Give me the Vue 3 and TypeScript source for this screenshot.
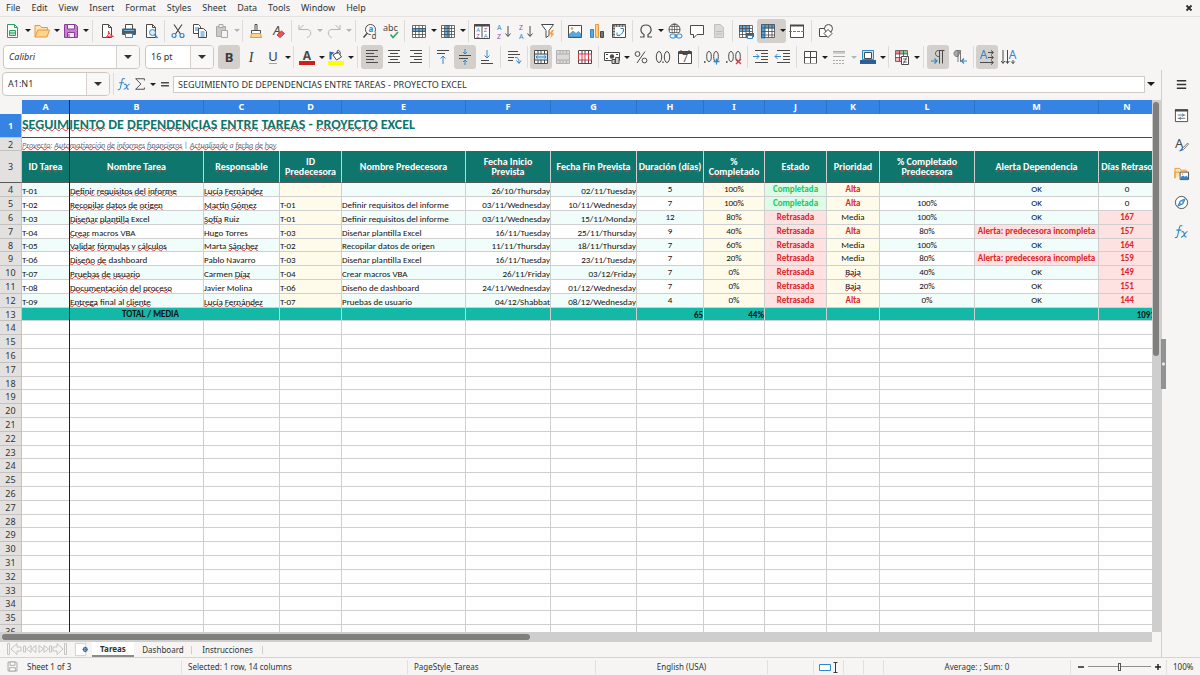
<script setup lang="ts">
import { computed, onBeforeUnmount, onMounted, ref } from 'vue'

interface Tool {
  icon?: string
  label?: string
  menu?: boolean
  on?: boolean
  off?: boolean
  slim?: boolean
  sep?: 'thin' | 'wide'
}

const t = (icon: string, label: string, extra: Partial<Tool> = {}): Tool => ({ icon, label, ...extra })
const thin: Tool = { sep: 'thin' }
const wide: Tool = { sep: 'wide' }

const menus = ['File', 'Edit', 'View', 'Insert', 'Format', 'Styles', 'Sheet', 'Data', 'Tools', 'Window', 'Help']

const D = '#4a4a4a'
const B = '#2f87cc'
const page = `<path d="M3.5 1.5h6l3 3v10h-9z" fill="#fff" stroke="${D}"/><path d="M9.5 1.5v3h3" fill="none" stroke="${D}"/>`
const gridLines = `<path d="M1.5 2.5h13v12h-13zM1.5 5.5h13M1.5 8.5h13M1.5 11.5h13M4.5 2.5v12M8 2.5v12M11.5 2.5v12" fill="none" stroke="${D}" stroke-width=".8"/>`
const txt = (x: number, y: number, s: string, size: number, fill: string, extra = '') =>
  `<text x="${x}" y="${y}" font-size="${size}" fill="${fill}" font-family="Noto Sans, sans-serif" ${extra}>${s}</text>`
const mid = 'text-anchor="middle"'
const lines = (a: number[][]) =>
  `<path d="${a.map(([x, y, w]) => `M${x} ${y}h${w}`).join('')}" stroke="${D}" fill="none"/>`

const icons: Record<string, string> = {
  new: `<path d="M2.5 1.5h7l3 3v10h-10z" fill="#fff" stroke="#28a35a"/><path d="M9.5 1.5v3h3" fill="none" stroke="#28a35a"/><path d="M4.5 7.5h6v5h-6zM4.5 10h6" fill="#bfe8ce" stroke="#28a35a"/>`,
  open: `<path d="M1 14V2.500h5l1.500 2h6V7" fill="#fbe3b3" stroke="#e8973a"/><path d="M1 14L4 7h11.500l-2.500 7z" fill="#fbd58e" stroke="#e8973a"/>`,
  save: `<path d="M1.500 1.500h11l2 2v11h-13z" fill="#c77fd0" stroke="#8a3d98"/><path d="M4.500 1.500h7v4.500h-7z" fill="#fff" stroke="#8a3d98"/><path d="M4.500 9.500h7v5h-7z" fill="#f4e3f6" stroke="#8a3d98"/><path d="M6 11v3" stroke="#8a3d98"/>`,
  pdf: `${page}<path d="M7 14.500c2-2 3-4 2.500-6.500c.5 3 2.500 5 5 5.500c-3-.8-5-.2-7.500 1z" fill="#fff" stroke="#e0333f"/>`,
  print: `<path d="M4.500 1.500h7v5h-7z" fill="#fff" stroke="${D}"/><rect x="1" y="5.500" width="14" height="6.500" rx="1" fill="#505a60"/><path d="M3 7.500h10" stroke="#6fb2e2"/><path d="M4.500 10.500h7v4h-7z" fill="#fff" stroke="${B}"/>`,
  preview: `${page}<circle cx="9.500" cy="9.500" r="3" fill="#d9ecfa" stroke="${B}"/><path d="M11.500 11.500l3 3.500" stroke="${B}" stroke-width="1.500"/>`,
  cut: `<path d="M4 1.500l6.500 9.500M12 1.500L5.500 11" stroke="${D}" fill="none" stroke-width="1.200"/><circle cx="4" cy="12.500" r="2" fill="none" stroke="${B}" stroke-width="1.200"/><circle cx="12" cy="12.500" r="2" fill="none" stroke="${B}" stroke-width="1.200"/>`,
  copy: `<path d="M1.500 1.500h5l2 2v7h-7z" fill="#fff" stroke="${D}"/><path d="M3 5h4M3 7h4" stroke="${B}"/><path d="M6.500 5.500h5l3 3v6h-8z" fill="#fff" stroke="${D}"/><path d="M8.500 9h4M8.500 11h4M8.500 13h4" stroke="${B}"/>`,
  paste: `<path d="M2.500 3.500h9v10h-9z" fill="#c9c9c9" stroke="#a8a8a8"/><path d="M5 1.500h4v3H5z" fill="#eee" stroke="#a8a8a8"/><path d="M7.500 7.500h6v7h-6z" fill="#f4f4f4" stroke="#a8a8a8"/>`,
  brush: `<path d="M7 1.500h2v6H7z" fill="#fff" stroke="${D}"/><path d="M3.500 7.500h9v3h-9z" fill="#fff" stroke="${D}"/><path d="M3.500 10.500l-1 4h11l-1-4z" fill="#fbd58e" stroke="#e8973a"/>`,
  clear: `${txt(7, 12, 'A', 13, D, mid + ' font-style="italic"')}<path d="M7 12l4.500-4l3 2.500l-4.500 4z" fill="#f0525c" stroke="#c9303b"/>`,
  undo: `<path d="M6.500 2L2 6.500h8c5 0 5 6.500 0 8M2 6.500V2" fill="none" stroke="#b5b5b5"/>`,
  redo: `<path d="M9.500 2L14 6.500H6c-5 0-5 6.500 0 8M14 6.500V2" fill="none" stroke="#b5b5b5"/>`,
  find: `<circle cx="8.500" cy="6.500" r="5" fill="#fff" stroke="${D}"/><path d="M5 10.500L1.500 14.500" stroke="${D}" stroke-width="1.500"/>${txt(6.5, 9, 'a', 8, B, 'font-weight="bold"')}<rect x="9" y="9" width="6" height="7" fill="#f6f5f4"/>${txt(9.5, 15.5, 'd', 8, D)}`,
  spell: `${txt(0, 7.5, 'abc', 9, D)}<path d="M7.500 11.500l2.500 3l5-5.500" fill="none" stroke="#27a560" stroke-width="1.500"/>`,
  row: `<rect x="1" y="2" width="14" height="13" fill="#fff"/><rect x="1" y="5" width="14" height="4" fill="#5fa8de"/>${gridLines}`,
  col: `<rect x="1" y="2" width="14" height="13" fill="#fff"/><rect x="5" y="2" width="5" height="13" fill="#5fa8de"/>${gridLines}`,
  sort: `<path d="M.5 1.500h15v14H.5zM8 1.500v13" fill="#fff" stroke="${D}"/><path d="M0 2.500h16" stroke="${D}" stroke-width="2"/>${txt(2.2, 8.500, 'A', 6, B)}${txt(2.2, 15, 'Z', 6, '#a349b0')}${txt(9.7, 8.500, 'Z', 6, '#a349b0')}${txt(9.7, 15, 'A', 6, B)}`,
  az: `${txt(1, 6.500, 'A', 7, B)}${txt(1, 15.500, 'Z', 7, '#a349b0')}<path d="M12 3v10M9.500 10.500L12 13.500l2.500-3" fill="none" stroke="${D}"/>`,
  za: `${txt(1, 6.500, 'Z', 7, '#a349b0')}${txt(1, 15.500, 'A', 7, B)}<path d="M12 3v10M9.500 10.500L12 13.500l2.500-3" fill="none" stroke="${D}"/>`,
  filter: `<path d="M1.500 1.500h12L9 7.500v5l-3 2v-7z" fill="#fff" stroke="${D}"/><path d="M12 7l-3 4.500h2.500L10 15.500l4.500-5h-2.500l2-3.500z" fill="#f5a03c"/>`,
  image: `<path d="M1.500 2.500h13v12h-13z" fill="#fff" stroke="${D}"/><path d="M2 14v-2.500l4-3.500l3 2.500l2.500-2l2.500 2.500v3z" fill="#5fa8de" stroke="${B}" stroke-width=".6"/><circle cx="5" cy="5.500" r="1.300" fill="#f0a23c"/>`,
  chart: `<path d="M1.500 6.500h3v8h-3z" fill="#5fa8de" stroke="${B}"/><path d="M6.500 1.500h3v13h-3z" fill="#fbd08a" stroke="#e8973a"/><path d="M11.500 8.500h3v6h-3z" fill="#777" stroke="${D}"/>`,
  pivot: `<path d="M1.500 1.500h13v13h-13z" fill="#fff" stroke="${D}"/><path d="M1.500 3h13M3 1.500v13" stroke="#666" stroke-width="2" stroke-dasharray="2 1"/><path d="M6 9.500v3h3M12.500 8.500v-3h-3M6 12.500c4 0 6-2 6.500-6" fill="none" stroke="${B}"/>`,
  omega: `<path d="M2 14h4v-2.500C1 8.500 2.500 2 8 2s7 6.500 2 9.500V14h4" fill="none" stroke="${D}" stroke-width="1.200"/>`,
  link: `<circle cx="7.500" cy="6.500" r="5.500" fill="#fff" stroke="${D}"/><path d="M2 6.500h11M7.500 1v11M3 3.500h9M3 9.500h9" stroke="${D}" stroke-width=".7"/><ellipse cx="7.500" cy="6.500" rx="2.500" ry="5.500" fill="none" stroke="${D}" stroke-width=".7"/><rect x="2" y="10" width="14" height="6" fill="#f6f5f4"/><rect x="3" y="11" width="6" height="4" rx="2" fill="none" stroke="${B}"/><rect x="9" y="11" width="6" height="4" rx="2" fill="none" stroke="${B}"/><path d="M7 13h4" stroke="${B}"/>`,
  comment: `<path d="M1.500 2.500h13v9H8l-3.500 3.500v-3.500h-3z" fill="#fff" stroke="${D}"/>`,
  header: `<path d="M3.500 1.500h6l3 3v10h-9z" fill="#d9d9d9" stroke="#c0c0c0"/><path d="M5 8.500h6M5 11h6" stroke="#bbb"/>`,
  prange: `<rect x="1" y="2" width="14" height="12" fill="#fff"/><rect x="1" y="2" width="11" height="6" fill="#5fa8de"/>${gridLines}<rect x="8" y="10" width="8" height="4" fill="#505a60"/><path d="M9.500 12.500h5v3h-5z" fill="#fff" stroke="${B}"/>`,
  freeze: `<path d="M1.500 2v12h13v-12z" fill="#fff"/><path d="M1 1.500h14v4H5v10H1z" fill="#4fa0dd"/><path d="M1.500 1.500h13v13h-13zM5 1.500v13M8.500 1.500v13M12 1.500v13M1.500 5h13M1.500 8.500h13M1.500 12h13" fill="none" stroke="${D}" stroke-width=".8"/>`,
  split: `<path d="M1.500 2.500h13v12h-13z" fill="#fff" stroke="${D}"/><path d="M1 2.500h14" stroke="${D}" stroke-width="2"/><path d="M0 8.500h16" stroke="${B}" stroke-dasharray="3 1"/>`,
  shapes: `<path d="M1.500 5.500h8v8h-8z" fill="#fff" stroke="${D}"/><circle cx="10.500" cy="5.500" r="4" fill="#f6f5f4" stroke="${D}"/><path d="M10 6.500l4 4l-4 4l-4-4z" fill="#fff" stroke="${D}"/>`,
  bold: txt(8, 12.5, 'B', 13, '#3a3a3a', mid + ' font-weight="bold"'),
  italic: `<text x="8" y="12.500" font-size="14" fill="#3a3a3a" font-family="Liberation Serif, serif" font-style="italic" ${mid}>I</text>`,
  underline: `${txt(8, 12, 'U', 13, '#3a3a3a', mid)}<path d="M4 14.500h8" stroke="#6fb2e2"/>`,
  fontcolor: `${txt(8, 11, 'A', 12, D, mid + ' font-weight="bold"')}<rect x="0" y="12" width="16" height="4" fill="#c9211e"/>`,
  highlight: `<path d="M5 6l5-3l3.500 5l-5 3z" fill="#fff" stroke="${D}"/><path d="M9 5q0-5 2-3.500t1 4" fill="none" stroke="${D}"/><path d="M1.500 2.500l5 1l-3 2.500v4.500h-2z" fill="#2b6fae"/><rect x="0" y="12" width="16" height="4" fill="#ffff00"/>`,
  left: lines([[2, 1.5, 12], [2, 4.5, 8], [2, 7.5, 12], [2, 10.5, 8], [2, 13.5, 12]]),
  center: lines([[2, 1.5, 12], [4, 4.5, 8], [2, 7.5, 12], [4, 10.5, 8], [2, 13.5, 12]]),
  right: lines([[2, 1.5, 12], [6, 4.5, 8], [2, 7.5, 12], [6, 10.5, 8], [2, 13.5, 12]]),
  top: `${lines([[2, 1.5, 12], [2, 4.5, 8]])}<path d="M8 15V7M5.500 9.500L8 7l2.500 2.500" fill="none" stroke="${B}"/>`,
  middle: `${lines([[2, 6.5, 12], [2, 9.5, 9]])}<path d="M8 0v4.500M6 3l2 2l2-2M8 16v-4.500M6 13l2-2l2 2" fill="none" stroke="${B}"/>`,
  bottom: `${lines([[2, 11.5, 8], [2, 14.5, 12]])}<path d="M8 1v8M5.500 6.500L8 9l2.500-2.500" fill="none" stroke="${B}"/>`,
  wrap: `${lines([[2, 2.5, 10], [2, 5.5, 12], [2, 8.5, 6], [2, 11.5, 5]])}<path d="M9 8.500c3 0 4 1 4 5.500M10.500 11.500L13 14.500l2-3" fill="none" stroke="${B}"/>`,
  merge: `<path d="M1.500 1.500h13v13h-13z" fill="#fff"/><path d="M1.500 5h13v6h-13z" fill="#cfe6f8"/><path d="M1.500 1.500h13v13h-13zM1.500 5h13M1.500 11h13M5 1.500V5M8 1.500V5M11.500 1.500V5M5 11v3.500M8 11v3.500M11.500 11v3.500" fill="none" stroke="${D}"/><path d="M3 8h10M4.500 6.500L3 8l1.500 1.500M11.500 6.500L13 8l-1.500 1.500" fill="none" stroke="${B}"/>`,
  mergeoff: `<path d="M1.500 1.500h13v13h-13z" fill="#d9d9d9"/><path d="M1.500 1.500h13v13h-13zM1.500 5h13M1.500 11h13M5 1.500V5M8 1.500V5M11.500 1.500V5M5 11v3.500M8 11v3.500M11.500 11v3.500" fill="none" stroke="#b0b0b0"/>`,
  unmerge: `<path d="M1.500 1.500h13v13h-13z" fill="#fff" stroke="${D}"/><path d="M5 1.500V5M8 1.500V5M11.500 1.500V5M5 11v3.500M8 11v3.500M11.500 11v3.500" stroke="${D}"/><path d="M1.500 5h13v6h-13zM5 5v6M8 5v6M11.500 5v6" fill="#fff" stroke="#dc3545"/>`,
  money: `<path d="M.5 3.500h15v8H.5z" fill="#fff" stroke="${D}"/><circle cx="8" cy="7.500" r="2.200" fill="${D}"/><path d="M2 5.500h2M12 5.500h2M2 9.500h2" stroke="${D}"/><path d="M8 10.500h3v4H8zM11.500 8.500h3.500v6h-3.500z" fill="#ccc" stroke="${D}"/>`,
  percent: `<circle cx="4.500" cy="5" r="2.400" fill="none" stroke="${D}"/><circle cx="11.500" cy="11.500" r="2.400" fill="none" stroke="${D}"/><path d="M12 2.500L4 14" stroke="${D}"/>`,
  number: `<ellipse cx="4" cy="8" rx="2.700" ry="5.500" fill="none" stroke="${D}"/><ellipse cx="12" cy="8" rx="2.700" ry="5.500" fill="none" stroke="${D}"/><path d="M8 12.500v1.500" stroke="${D}" stroke-width="1.300"/>`,
  date: `<path d="M1.500 2.500h13v12h-13z" fill="#fff" stroke="${D}"/><path d="M1.500 4h13" stroke="${D}" stroke-width="2"/><path d="M4 1v3M12 1v3" stroke="${D}"/>${txt(8, 13, '7', 10, D, mid)}`,
  adddec: `<path d="M.8 12v2" stroke="${D}" stroke-width="1.300"/><ellipse cx="5" cy="7.500" rx="2.300" ry="5" fill="none" stroke="${D}"/><ellipse cx="12" cy="7.500" rx="2.300" ry="5" fill="none" stroke="${D}"/><path d="M12.500 9.500v6M9.500 12.500h6" stroke="${B}" stroke-width="1.300"/>`,
  deldec: `<path d="M.8 12v2" stroke="${D}" stroke-width="1.300"/><ellipse cx="5" cy="7.500" rx="2.300" ry="5" fill="none" stroke="${D}"/><ellipse cx="12" cy="7.500" rx="2.300" ry="5" fill="none" stroke="${D}"/><path d="M10 10l5 5M15 10l-5 5" stroke="#dc3545" stroke-width="1.300"/>`,
  indent: `${lines([[2, 1.5, 13], [8, 4.5, 7], [8, 7.5, 7], [8, 10.5, 7], [2, 13.5, 13]])}<path d="M0 7.500h6M3.500 5L6 7.500l-2.500 2.500" fill="none" stroke="${B}"/>`,
  outdent: `${lines([[2, 1.5, 13], [8, 4.5, 7], [8, 7.5, 7], [8, 10.5, 7], [2, 13.5, 13]])}<path d="M6 7.500H0M2.500 5L0 7.500l2.500 2.500" fill="none" stroke="${B}"/>`,
  border: `<path d="M2.500 2.500h12v12h-12zM8.500 2.500v12M2.500 8.500h12" fill="#fff" stroke="${D}"/><path d="M2 14.500h13" stroke="#e8973a"/>`,
  lines: `<path d="M2 2.500h12M2 4h12M2 7.500h12" stroke="#aaa" stroke-width="1.200"/><path d="M2 11.500h12M2 14.500h12" stroke="#aaa" stroke-dasharray="2 1"/>`,
  bordercolor: `<path d="M2.500 1.500h11v9h-11z" fill="#cfe6f8" stroke="${B}"/><path d="M4.500 3.500h7v6h-7z" fill="#fff" stroke="${D}"/><rect x="0" y="11" width="16" height="4" fill="#2a6099"/>`,
  cond: `<path d="M1.500 1.500h12v11h-12z" fill="#fff"/><rect x="2" y="2" width="5" height="3" fill="#f08080"/><rect x="7" y="2" width="6" height="3" fill="#7ec98f"/><rect x="2" y="8" width="5" height="4" fill="#f5b5b5"/><path d="M1.500 1.500h12v11h-12zM1.500 5h12M1.500 8.500h12M5.500 1.500v11M9.500 1.500v11" fill="none" stroke="${D}" stroke-width=".8"/><path d="M7.500 7.500h7v8h-7z" fill="#fff" stroke="${D}"/><path d="M9 10h4M9 13h4M12.500 8.500l-3 6" stroke="${D}" stroke-width=".8"/>`,
  ltr: `<path d="M14.500 1.500H8.500c-4 0-4 6 0 6h1M9.500 1.500V14.500M12.500 1.500V14.500" fill="none" stroke="${D}"/><path d="M1 12h6M4.500 9.500L7 12l-2.500 2.500" fill="none" stroke="${B}" stroke-width="1.200"/>`,
  rtl: `<path d="M8.500 1.500H5c-4 0-4 6 0 6h1z" fill="#aaa" stroke="#777"/><path d="M6 1.500V13M8.500 1.500V13" fill="none" stroke="#777"/><path d="M15 12H9.500M12 9.500L9.500 12L12 14.500" fill="none" stroke="${B}" stroke-width="1.200"/>`,
  horiz: `${txt(4.5, 10, 'A', 12, B, mid)}<path d="M9 3.500h5M12 1.500l2.500 2l-2.500 2M9 8.500h5M12 6.500l2.500 2l-2.500 2M1 13.500h13M12 11.500l2.500 2l-2.500 2" fill="none" stroke="${D}"/>`,
  vert: `${txt(11.5, 10, 'A', 12, B, mid)}<path d="M2 1v13M.2 12L2 14.500L3.800 12M6.500 1v13M4.700 12L6.500 14.500L8.300 12M12 11v3.500M10.200 12.500L12 14.500l1.800-2" fill="none" stroke="${D}"/>`,
  fx: `<path d="M9 2.300C7 .8 6 2 5.500 5L4 12c-.4 2-1.500 3-3 2.200M2.500 6.500h5.500" fill="none" stroke="${B}" stroke-width="1.200"/><path d="M8 8.500c2-1 2.500 0 3 2.500s1 3.500 2.500 2.500M14.500 8c-2.500 0-4 6.500-7 6" fill="none" stroke="${B}" stroke-width="1.200"/>`,
  sum: `<path d="M13 4V2H3l6 6l-6 6h10v-2" fill="none" stroke="${D}" stroke-width="1.100"/>`,
  equal: `<path d="M3.500 6.500h9M3.500 10h9" stroke="${D}" stroke-width="1.600"/>`,
  burger: `<path d="M3 4h10M3 8h10M3 12h10" stroke="#333" stroke-width="1.500"/>`,
  props: `<path d="M1.500 2h13v12.500h-13z" fill="#fff" stroke="${D}"/><path d="M1 2.500h14" stroke="${D}" stroke-width="2.500"/><path d="M4 7.500h8M4 11h8" stroke="${D}" stroke-width=".8"/><path d="M8.500 6l2 1.500l-2 1.500M7.500 9.500l-2 1.500l2 1.500" fill="none" stroke="${B}"/>`,
  styles: `${txt(5.5, 12, 'A', 14, D, mid)}<path d="M14.500 6.500l1 1l-5.500 6l-1.500-1z" fill="#fff" stroke="${D}" stroke-width=".8"/><path d="M5 15q4 1 5-2l-1.800-1.200Q6.500 14.500 5 15z" fill="${B}"/>`,
  gallery: `<path d="M1 13V2.500h5l1.500 2h5.500v3" fill="#fbe3b3" stroke="#e8973a"/><path d="M1 13V6.500h5" fill="none" stroke="#e8973a"/><path d="M6.500 6.500h9v8h-9z" fill="#fff" stroke="${D}"/><path d="M7 14v-2l2.500-2l2 1.500l1.500-1l2 1.500v2z" fill="${B}"/><circle cx="9" cy="8.500" r=".8" fill="#e8973a"/>`,
  compass: `<circle cx="8" cy="8" r="6.500" fill="#fff" stroke="${D}"/><path d="M12 4L9.500 9.500L4 12l2.500-5.500z" fill="#5fa8de" stroke="${B}"/><circle cx="8" cy="8" r="1" fill="#fff"/>`,
  disk: `<path d="M2.500 2.500h10l1 1v10h-11z" fill="#f6f5f4" stroke="#999"/><path d="M5 2.500h6v4H5zM4.500 9.500h7v4h-7z" fill="#fff" stroke="#999"/>`,
  addsheet: `<path d="M1.500 1.500h11v13h-11z" fill="#fff" stroke="#cfcfcf"/><circle cx="12" cy="8" r="2" fill="none" stroke="#3465a4" stroke-width="1.300"/><path d="M12 5v6M9 8h6" stroke="#3465a4" stroke-width=".7"/>`,
}

const standardBar: Tool[] = [
  t('new', 'New', { menu: true }), t('open', 'Open', { menu: true }), t('save', 'Save', { menu: true }), wide,
  t('pdf', 'Export as PDF'), t('print', 'Print'), t('preview', 'Print Preview'), thin,
  t('cut', 'Cut'), t('copy', 'Copy'), t('paste', 'Paste', { menu: true, off: true }), thin,
  t('brush', 'Clone Formatting'), t('clear', 'Clear Direct Formatting'), thin,
  t('undo', 'Undo', { menu: true, off: true }), t('redo', 'Redo', { menu: true, off: true }), wide,
  t('find', 'Find and Replace'), t('spell', 'Spelling', { slim: true }), wide,
  t('row', 'Row', { menu: true }), t('col', 'Column', { menu: true }), thin,
  t('sort', 'Sort'), t('az', 'Sort Ascending'), t('za', 'Sort Descending'), t('filter', 'AutoFilter'), thin,
  t('image', 'Insert Image'), t('chart', 'Insert Chart'), t('pivot', 'Insert Pivot Table'), thin,
  t('omega', 'Special Character', { menu: true }), t('link', 'Insert Hyperlink'), t('comment', 'Insert Comment'),
  t('header', 'Headers and Footers', { off: true }), thin,
  t('prange', 'Define Print Area'), t('freeze', 'Freeze Rows and Columns', { menu: true, on: true }),
  t('split', 'Split Window'), wide, t('shapes', 'Show Draw Functions'),
]

const formatBar: Tool[] = [
  t('bold', 'Bold', { on: true }), t('italic', 'Italic'), t('underline', 'Underline', { menu: true }), thin,
  t('fontcolor', 'Font Color', { menu: true }), t('highlight', 'Background Color', { menu: true }), wide,
  t('left', 'Align Left', { on: true }), t('center', 'Center Horizontally'), t('right', 'Align Right'), thin,
  t('top', 'Align Top'), t('middle', 'Center Vertically', { on: true }), t('bottom', 'Align Bottom'), thin,
  t('wrap', 'Wrap Text'), thin,
  t('merge', 'Merge and Center Cells', { on: true }), t('mergeoff', 'Merge Cells', { off: true }), t('unmerge', 'Unmerge Cells'), thin,
  t('money', 'Format as Currency', { menu: true }), t('percent', 'Format as Percent'), t('number', 'Format as Number'), t('date', 'Format as Date'), thin,
  t('adddec', 'Add Decimal Place'), t('deldec', 'Delete Decimal Place'), thin,
  t('indent', 'Increase Indent'), t('outdent', 'Decrease Indent'), thin,
  t('border', 'Borders', { menu: true }), t('lines', 'Border Style', { menu: true, off: true }), t('bordercolor', 'Border Color', { menu: true }), thin,
  t('cond', 'Conditional', { menu: true }), wide,
  t('ltr', 'Left-To-Right', { on: true }), t('rtl', 'Right-To-Left'), thin,
  t('horiz', 'Text direction from left to right', { on: true }), t('vert', 'Text direction from top to bottom'),
]

const deck = [
  { icon: 'props', label: 'Properties' },
  { icon: 'styles', label: 'Styles' },
  { icon: 'gallery', label: 'Gallery' },
  { icon: 'compass', label: 'Navigator' },
  { icon: 'fx', label: 'Functions' },
]

const columns = 'ABCDEFGHIJKLMN'.split('')
const fontName = ref('Calibri')
const fontSize = ref('16 pt')
const cellRange = ref('A1:N1')
const formula = ref('SEGUIMIENTO DE DEPENDENCIAS ENTRE TAREAS - PROYECTO EXCEL')
const zoomLevel = ref(100)

// Words wrapped in tildes carry the spell checker's wavy line.
const title = '~SEGUIMIENTO~ DE ~DEPENDENCIAS~ ~ENTRE~ ~TAREAS~ - ~PROYECTO~ EXCEL'
const subtitle = '~Proyecto~: ~Automatización~ ~de~ ~informes~ ~financieros~ | ~Actualizado~ a ~fecha~ ~de~ ~hoy~'
const headings = [
  'ID ~Tarea~', '~Nombre~ ~Tarea~', '~Responsable~', 'ID ~Predecesora~', '~Nombre~ ~Predecesora~',
  '~Fecha~ ~Inicio~ ~Prevista~', '~Fecha~ ~Fin~ ~Prevista~', '~Duración~ (~días~)', '% ~Completado~', '~Estado~',
  '~Prioridad~', '% ~Completado~ ~Predecesora~', '~Alerta~ ~Dependencia~', '~Días~ ~Retraso~',
]

const tasks: string[][] = [
  ['T-01', '~Definir~ ~requisitos~ ~del~ ~informe~', '~Lucía~ ~Fernández~', '', '', '26/10/Thursday', '02/11/Tuesday', '5', '100%', 'Completada', 'Alta', '', 'OK', '0'],
  ['T-02', '~Recopilar~ ~datos~ ~de~ ~origen~', '~Martín~ ~Gómez~', 'T-01', 'Definir requisitos del informe', '03/11/Wednesday', '10/11/Wednesday', '7', '100%', 'Completada', 'Alta', '100%', 'OK', '0'],
  ['T-03', '~Diseñar~ ~plantilla~ Excel', '~Sofía~ Ruiz', 'T-01', 'Definir requisitos del informe', '03/11/Wednesday', '15/11/Monday', '12', '80%', 'Retrasada', 'Media', '100%', 'OK', '167'],
  ['T-04', '~Crear~ macros VBA', 'Hugo Torres', 'T-03', 'Diseñar plantilla Excel', '16/11/Tuesday', '25/11/Thursday', '9', '40%', 'Retrasada', 'Alta', '80%', 'Alerta: predecesora incompleta', '157'],
  ['T-05', '~Validar~ ~fórmulas~ y ~cálculos~', 'Marta ~Sánchez~', 'T-02', 'Recopilar datos de origen', '11/11/Thursday', '18/11/Thursday', '7', '60%', 'Retrasada', 'Media', '100%', 'OK', '164'],
  ['T-06', '~Diseño~ ~de~ dashboard', 'Pablo Navarro', 'T-03', 'Diseñar plantilla Excel', '16/11/Tuesday', '23/11/Tuesday', '7', '20%', 'Retrasada', 'Media', '80%', 'Alerta: predecesora incompleta', '159'],
  ['T-07', '~Pruebas~ ~de~ ~usuario~', 'Carmen ~Díaz~', 'T-04', 'Crear macros VBA', '26/11/Friday', '03/12/Friday', '7', '0%', 'Retrasada', '~Baja~', '40%', 'OK', '149'],
  ['T-08', '~Documentación~ ~del~ ~proceso~', 'Javier Molina', 'T-06', 'Diseño de dashboard', '24/11/Wednesday', '01/12/Wednesday', '7', '0%', 'Retrasada', '~Baja~', '20%', 'OK', '151'],
  ['T-09', '~Entrega~ final al ~cliente~', '~Lucía~ ~Fernández~', 'T-07', 'Pruebas de usuario', '04/12/Shabbat', '08/12/Wednesday', '4', '0%', 'Retrasada', 'Alta', '0%', 'OK', '144'],
]
const totals = ['', '', '', '', '65', '44%', '', '', '', '', '1091']

// Blank rows continue below the totals until the window is filled.
const winHeight = ref(window.innerHeight)
const onResize = () => { winHeight.value = window.innerHeight }
onMounted(() => window.addEventListener('resize', onResize))
onBeforeUnmount(() => window.removeEventListener('resize', onResize))
const emptyRows = computed(() => {
  const count = Math.max(0, Math.ceil((winHeight.value - 364) / 13.75))
  return Array.from({ length: count }, (_, i) => i + 14)
})

const parts = (s: string) =>
  s.split('~').map((text, i) => ({ text, wavy: i % 2 === 1 })).filter((p) => p.text)

function cellClass(value: string, col: number): string[] {
  const out: string[] = []
  if (col === 5 || col === 6) out.push('end')
  if (col >= 7) out.push('mid')
  if (col === 3 || col === 8 || col === 10) out.push('cream')
  if (value === 'Completada') out.push('done')
  if (value === 'Retrasada' || value.startsWith('Alerta') || (col === 13 && value !== '0')) out.push('late')
  if (value === 'Alta') out.push('high')
  return out
}
</script>

<template>
  <div class="app">
    <nav class="menubar" aria-label="Menu">
      <button v-for="m in menus" :key="m" type="button">{{ m }}</button>
      <button type="button" class="close" aria-label="Close document">
        <svg viewBox="0 0 8 8"><path d="M1.500 1.500l5 5M6.500 1.500l-5 5" stroke="#2e2e2e" stroke-width="1.800" /></svg>
      </button>
    </nav>

    <div class="toolbar" role="toolbar" aria-label="Standard">
      <template v-for="(b, i) in standardBar" :key="i">
        <span v-if="b.sep" class="sep" :class="b.sep"></span>
        <span v-else class="tool" :class="{ on: b.on, off: b.off, slim: b.slim }">
          <button type="button" class="btn" :aria-label="b.label"><svg viewBox="0 0 16 16" v-html="icons[b.icon!]"></svg></button>
          <button v-if="b.menu" type="button" class="drop" :aria-label="b.label + ' options'"></button>
        </span>
      </template>
    </div>

    <div class="toolbar format" role="toolbar" aria-label="Formatting">
      <span class="combo font">
        <input v-model="fontName" aria-label="Font Name" />
        <button type="button" aria-label="Choose font"></button>
      </span>
      <span class="combo size">
        <input v-model="fontSize" aria-label="Font Size" />
        <button type="button" aria-label="Choose size"></button>
      </span>
      <template v-for="(b, i) in formatBar" :key="i">
        <span v-if="b.sep" class="sep" :class="b.sep"></span>
        <span v-else class="tool" :class="{ on: b.on, off: b.off }">
          <button type="button" class="btn" :aria-label="b.label"><svg viewBox="0 0 16 16" v-html="icons[b.icon!]"></svg></button>
          <button v-if="b.menu" type="button" class="drop" :aria-label="b.label + ' options'"></button>
        </span>
      </template>
    </div>

    <div class="work">
      <main class="doc">
        <div class="formulabar">
          <span class="combo name">
            <input v-model="cellRange" aria-label="Name Box" />
            <button type="button" aria-label="Choose range"></button>
          </span>
          <span class="sep thin"></span>
          <button type="button" class="fbtn" aria-label="Function Wizard"><svg viewBox="0 0 16 16" v-html="icons.fx"></svg></button>
          <button type="button" class="fbtn" aria-label="Select Function"><svg viewBox="0 0 16 16" v-html="icons.sum"></svg></button>
          <button type="button" class="drop" aria-label="Function options"></button>
          <button type="button" class="fbtn" aria-label="Formula"><svg viewBox="0 0 16 16" v-html="icons.equal"></svg></button>
          <input v-model="formula" class="formula" aria-label="Input line" />
          <button type="button" class="expand" aria-label="Expand Formula Bar"></button>
        </div>

        <div class="gridwrap">
          <div class="sheet">
            <table>
              <colgroup>
                <col class="c-row" />
                <col v-for="c in columns" :key="c" :class="'c-' + c" />
              </colgroup>
              <thead>
                <tr class="letters">
                  <td></td>
                  <th v-for="c in columns" :key="c" scope="col">{{ c }}</th>
                </tr>
              </thead>
              <tbody>
                <tr class="r-title">
                  <th scope="row">1</th>
                  <td colspan="14"><span v-for="(p, k) in parts(title)" :key="k" :class="{ wavy: p.wavy }">{{ p.text }}</span></td>
                </tr>
                <tr class="r-sub">
                  <th scope="row">2</th>
                  <td colspan="14"><span v-for="(p, k) in parts(subtitle)" :key="k" :class="{ wavy: p.wavy }">{{ p.text }}</span></td>
                </tr>
                <tr class="r-head">
                  <th scope="row">3</th>
                  <td v-for="h in headings" :key="h"><span v-for="(p, k) in parts(h)" :key="k" :class="{ wavy: p.wavy }">{{ p.text }}</span></td>
                </tr>
              </tbody>
              <tbody class="body">
                <tr v-for="(r, i) in tasks" :key="r[0]" :class="{ tint: i % 2 === 0 }">
                  <th scope="row">{{ i + 4 }}</th>
                  <td v-for="(v, c) in r" :key="c" :class="cellClass(v, c)"><span v-for="(p, k) in parts(v)" :key="k" :class="{ wavy: p.wavy }">{{ p.text }}</span></td>
                </tr>
                <tr class="r-total">
                  <th scope="row">13</th>
                  <td colspan="3" class="mid">TOTAL / MEDIA</td>
                  <td v-for="(v, c) in totals" :key="c" class="end">{{ v }}</td>
                </tr>
                <tr v-for="n in emptyRows" :key="n">
                  <th scope="row">{{ n }}</th>
                  <td v-for="c in columns" :key="c"></td>
                </tr>
              </tbody>
            </table>
            <span class="freezeline"></span>
          </div>
          <div class="vscroll"><span></span></div>
        </div>
        <div class="hscroll"><span></span></div>

        <div class="tabs" role="tablist">
          <svg class="navs" viewBox="0 0 62 14" fill="none" stroke="#c4c4c4">
            <path d="M1.500 1.500h2v11h-2zM11 1.500L5 7l6 5.500V9h4V5h-4zM17.500 4v6h2V4zM25 3.500L20.500 7l4.500 3.500zM30 3.500L25.500 7l4.500 3.500zM33 3.500L37.500 7L33 10.500zM38 3.500L42.500 7L38 10.500zM43.500 4v6h2V4zM51 1.500L57 7l-6 5.500V9h-4V5h4zM58.500 1.500h2v11h-2z" />
          </svg>
          <button type="button" class="add" aria-label="Add sheet"><svg viewBox="0 0 16 16" v-html="icons.addsheet"></svg></button>
          <button type="button" role="tab" aria-selected="true" class="tab active">Tareas</button>
          <button type="button" role="tab" aria-selected="false" class="tab second">Dashboard</button>
          <button type="button" role="tab" aria-selected="false" class="tab third">Instrucciones</button>
        </div>
      </main>

      <aside class="deck" aria-label="Sidebar">
        <button type="button" class="grip" aria-label="Show sidebar"></button>
        <button type="button" class="dbtn first" aria-label="Sidebar Settings"><svg viewBox="0 0 16 16" v-html="icons.burger"></svg></button>
        <button v-for="d in deck" :key="d.label" type="button" class="dbtn" :aria-label="d.label"><svg viewBox="0 0 16 16" v-html="icons[d.icon]"></svg></button>
      </aside>
    </div>

    <footer class="status">
      <span class="s-sheet"><svg viewBox="0 0 16 16" v-html="icons.disk"></svg>Sheet 1 of 3</span>
      <span>Selected: 1 row, 14 columns</span>
      <span>PageStyle_Tareas</span>
      <span class="c">English (USA)</span>
      <span></span>
      <span class="c s-mode"><svg viewBox="0 0 20 12" fill="none"><path d="M.5 3.500h11v6H.5z" stroke="#2f87cc" fill="#fff" /><path d="M14.500 1.500h4M16.500 1.500v10M14.500 11.500h4" stroke="#3a3a3a" /></svg></span>
      <span></span>
      <span></span>
      <span class="c">Average: ; Sum: 0</span>
      <span class="s-zoom">
        <button type="button" aria-label="Zoom out"><svg viewBox="0 0 8 8"><path d="M1 4h6" stroke="#222" stroke-width="1.500" /></svg></button>
        <input v-model="zoomLevel" type="range" min="0" max="200" aria-label="Zoom" />
        <button type="button" aria-label="Zoom in"><svg viewBox="0 0 8 8"><path d="M1 4h6M4 1v6" stroke="#222" stroke-width="1.500" /></svg></button>
      </span>
      <span class="s-pct">{{ zoomLevel }}%</span>
    </footer>
  </div>
</template>

<style>
body {
  margin: 0;
  background: #f6f5f4;
}
</style>

<style scoped>
.app {
  display: flex;
  flex-direction: column;
  height: 100vh;
  overflow: hidden;
  background: #f6f5f4;
  color: #2e3436;
  font: 9px/14px "Noto Sans", sans-serif;
}
button, input {
  font: inherit;
  color: inherit;
  margin: 0;
  padding: 0;
  border: 0;
  background: none;
  min-width: 0;
  outline: 0;
}
svg {
  display: block;
  overflow: visible;
}

.menubar {
  display: flex;
  align-items: center;
  gap: 1px;
  height: 16px;
  padding-left: 1px;
  border-bottom: 1px solid #e4e2e0;
}
.menubar button {
  padding: 0 5px;
}
.menubar .close {
  margin-left: auto;
  padding: 0 7px;
}
.close svg {
  width: 8px;
  height: 8px;
}

.toolbar {
  display: flex;
  align-items: center;
  height: 27px;
  padding-left: 2px;
}
.toolbar.format {
  height: 26px;
  padding-left: 3px;
}
.tool {
  display: flex;
  align-items: center;
  height: 24px;
  border-radius: 3px;
}
.tool.on {
  background: #d3cfcb;
}
.btn {
  display: flex;
  justify-content: center;
  width: 22px;
}
.slim .btn {
  width: 20px;
}
.btn svg {
  width: 16px;
  height: 16px;
}
.drop {
  width: 7px;
  height: 16px;
  display: flex;
  align-items: center;
  justify-content: center;
}
.drop::before, .expand::before, .combo button::before {
  content: "";
  border: 3px solid transparent;
  border-top-color: #1d1d1d;
  border-bottom: 0;
}
.off .drop::before {
  border-top-color: #b5b5b5;
}
.sep {
  width: 5px;
  height: 22px;
  background: linear-gradient(#dedcda, #dedcda) center / 1px 100% no-repeat;
}
.sep.wide {
  width: 7px;
}

.combo {
  display: flex;
  box-sizing: border-box;
  height: 24px;
  background: #fff;
  border: 1px solid #cdc7c2;
  border-radius: 4px;
}
.combo input {
  flex: 1;
  padding-left: 5px;
}
.combo button {
  width: 23px;
  display: flex;
  align-items: center;
  justify-content: center;
  border-left: 1px solid #d6d1cd;
  background: #f9f8f7;
  border-radius: 0 3px 3px 0;
}
.combo button::before {
  border-width: 4px 4px 0;
  border-top-color: #2e3436;
}
.combo.font {
  width: 137px;
  margin-right: 5px;
}
.combo.font input {
  font-style: italic;
}
.combo.size {
  width: 69px;
  margin-right: 4px;
}
.combo.name {
  width: 108px;
  margin-right: 1px;
}

.work {
  flex: 1;
  min-height: 0;
  display: flex;
}
.doc {
  flex: 1;
  min-width: 0;
  display: flex;
  flex-direction: column;
}
.formulabar {
  display: flex;
  align-items: center;
  height: 28px;
  padding: 0 5px 2px 2px;
}
.fbtn {
  width: 16px;
}
.fbtn svg {
  width: 14px;
  height: 14px;
  margin: 0 auto;
}
.formulabar .drop {
  width: 9px;
}
.formula {
  flex: 1;
  box-sizing: border-box;
  height: 17px;
  padding-left: 4px;
  background: #fff;
  border: 1px solid #cfcbc8;
}
.expand {
  width: 11px;
  display: flex;
  justify-content: center;
}
.expand::before {
  border-width: 4px 4px 0;
}

.gridwrap {
  flex: 1;
  min-height: 0;
  display: flex;
}
.sheet {
  position: relative;
  flex: 1;
  min-width: 0;
  overflow: hidden;
  background: #fff;
}
table {
  table-layout: fixed;
  width: 1156px;
  border-collapse: separate;
  border-spacing: 0;
  font: 9px/11px Carlito, Lato, sans-serif;
  color: #111;
}
.c-row { width: 22px; }
.c-A { width: 48px; }
.c-B { width: 134px; }
.c-C { width: 76px; }
.c-D { width: 62px; }
.c-E { width: 124px; }
.c-F { width: 85px; }
.c-G { width: 86px; }
.c-H { width: 67px; }
.c-I { width: 61px; }
.c-J { width: 62px; }
.c-K { width: 53px; }
.c-L { width: 95px; }
.c-M { width: 124px; }
.c-N { width: 57px; }
td, th {
  box-sizing: border-box;
  padding: 0;
  white-space: nowrap;
  overflow: hidden;
}
td {
  border-right: 1px solid #cfcfcf;
  border-bottom: 1px solid #cfcfcf;
  vertical-align: bottom;
}
tbody th {
  background: #e3e1df;
  border-right: 1px solid #c4c2c0;
  border-bottom: 1px solid #c4c2c0;
  font: 9px/11px "Noto Sans", sans-serif;
  color: #333;
}
.letters {
  height: 14px;
}
.letters td {
  border: 0;
  background: #f6f5f4;
}
.letters th {
  background: #3584e4;
  border-right: 1px solid #2b72c9;
  color: #fff;
  font: bold 9px/12px "Noto Sans", sans-serif;
}
.r-title {
  height: 24px;
}
.r-title th {
  background: #3584e4;
  color: #fff;
  font-weight: bold;
}
.r-title td {
  border-right: 0;
  border-bottom-color: #4a4a4a;
  color: #0f766e;
  font-size: 14px;
  line-height: 18px;
  font-weight: bold;
  vertical-align: top;
  padding-top: 2px;
}
.r-sub {
  height: 13px;
}
.r-sub td {
  border: 0;
  color: #6b7280;
  font-size: 8px;
  font-style: italic;
}
.r-head {
  height: 32px;
}
.r-head th, .r-head td {
  border-bottom-color: #5a5a5a;
}
.r-head td {
  background: #0f766e;
  color: #fff;
  font-size: 10px;
  line-height: 10px;
  font-weight: bold;
  text-align: center;
  vertical-align: middle;
  white-space: normal;
}
.body tr {
  height: 14px;
}
.body tr:nth-child(5n) {
  height: 13px;
}
.tint td {
  background: #f0fdfa;
}
.body .end {
  text-align: right;
}
.body .mid {
  text-align: center;
  vertical-align: top;
}
.body .cream {
  background: #fffbeb;
}
.body .done {
  background: #dcfce7;
  color: #22c55e;
  font-weight: bold;
}
.body .late {
  background: #fee2e2;
  color: #dc2626;
  font-weight: bold;
}
.body .high {
  color: #dc2626;
  font-weight: bold;
}
.r-total td {
  background: #14b8a6;
  font-weight: bold;
}
.wavy {
  text-decoration: underline wavy #e8312f;
  text-decoration-thickness: 1px;
  text-underline-offset: -2px;
  text-decoration-skip-ink: none;
}
.freezeline {
  position: absolute;
  left: 69px;
  top: 0;
  bottom: 0;
  width: 1px;
  background: #222;
}
.vscroll {
  width: 9px;
  background: #cecece;
  padding: 2px 2px 0 1px;
  box-sizing: border-box;
}
.vscroll span {
  display: block;
  height: 48%;
  border-radius: 3px;
  background: #7f807e;
}
.hscroll {
  height: 10px;
  box-sizing: border-box;
  padding: 2px;
  margin-right: 9px;
  background: #cecece;
}
.hscroll span {
  display: block;
  width: 46%;
  height: 6px;
  border-radius: 3px;
  background: #7f807e;
}

.tabs {
  display: flex;
  align-items: stretch;
  height: 15px;
  padding-left: 6px;
  font-size: 8px;
}
.navs {
  width: 62px;
  height: 14px;
}
.add {
  margin: 0 3px 0 6px;
}
.add svg {
  width: 15px;
  height: 15px;
}
.tab.active {
  box-sizing: border-box;
  width: 42px;
  background: #fff;
  border-bottom: 2px solid #8b8b89;
  font-weight: bold;
  line-height: 13px;
}
.tab.second {
  width: 58px;
}
.tab.third {
  width: 71px;
}
.second, .third {
  background: linear-gradient(#cfcdcb, #cfcdcb) right / 1px 8px no-repeat;
}

.deck {
  position: relative;
  display: flex;
  flex-direction: column;
  width: 38px;
  border-left: 1px solid #d0cecc;
}
.grip {
  position: absolute;
  left: -1px;
  top: 50%;
  width: 5px;
  height: 50px;
  margin-top: -25px;
  background: radial-gradient(circle, #eee 1px, #929292 2px);
}
.dbtn {
  height: 29px;
  display: flex;
  align-items: center;
  justify-content: center;
}
.dbtn.first {
  height: 31px;
  padding-bottom: 3px;
}
.dbtn svg {
  width: 15px;
  height: 15px;
}

.status {
  display: grid;
  grid-template-columns: 182fr 226fr 188fr 172fr 46fr 30fr 20fr 20fr 187fr 96fr 33fr;
  height: 18px;
  box-sizing: border-box;
  border-top: 1px solid #d6d4d2;
  align-items: center;
  font-size: 8px;
}
.status > span {
  display: flex;
  align-items: center;
  box-sizing: border-box;
  min-width: 0;
  height: 14px;
  padding-left: 6px;
  border-right: 1px solid #e2e0de;
  white-space: nowrap;
}
.status > span:last-child {
  border-right: 0;
}
.status .c {
  justify-content: center;
  padding: 0;
}
.s-sheet {
  gap: 8px;
}
.s-sheet svg {
  width: 13px;
  height: 13px;
}
.s-mode svg {
  width: 20px;
  height: 12px;
}
.s-zoom button svg {
  width: 8px;
  height: 8px;
}
.s-zoom input {
  flex: 1;
  width: 0;
  margin: 0 3px;
  height: 8px;
  appearance: none;
  background: linear-gradient(#8f8f8f, #8f8f8f) center / 100% 1px no-repeat;
}
.s-zoom input::-webkit-slider-thumb {
  appearance: none;
  width: 3px;
  height: 8px;
  background: #f6f5f4;
  border: 1px solid #555;
}
.status > .s-zoom {
  padding: 0 4px 0 6px;
}
</style>
